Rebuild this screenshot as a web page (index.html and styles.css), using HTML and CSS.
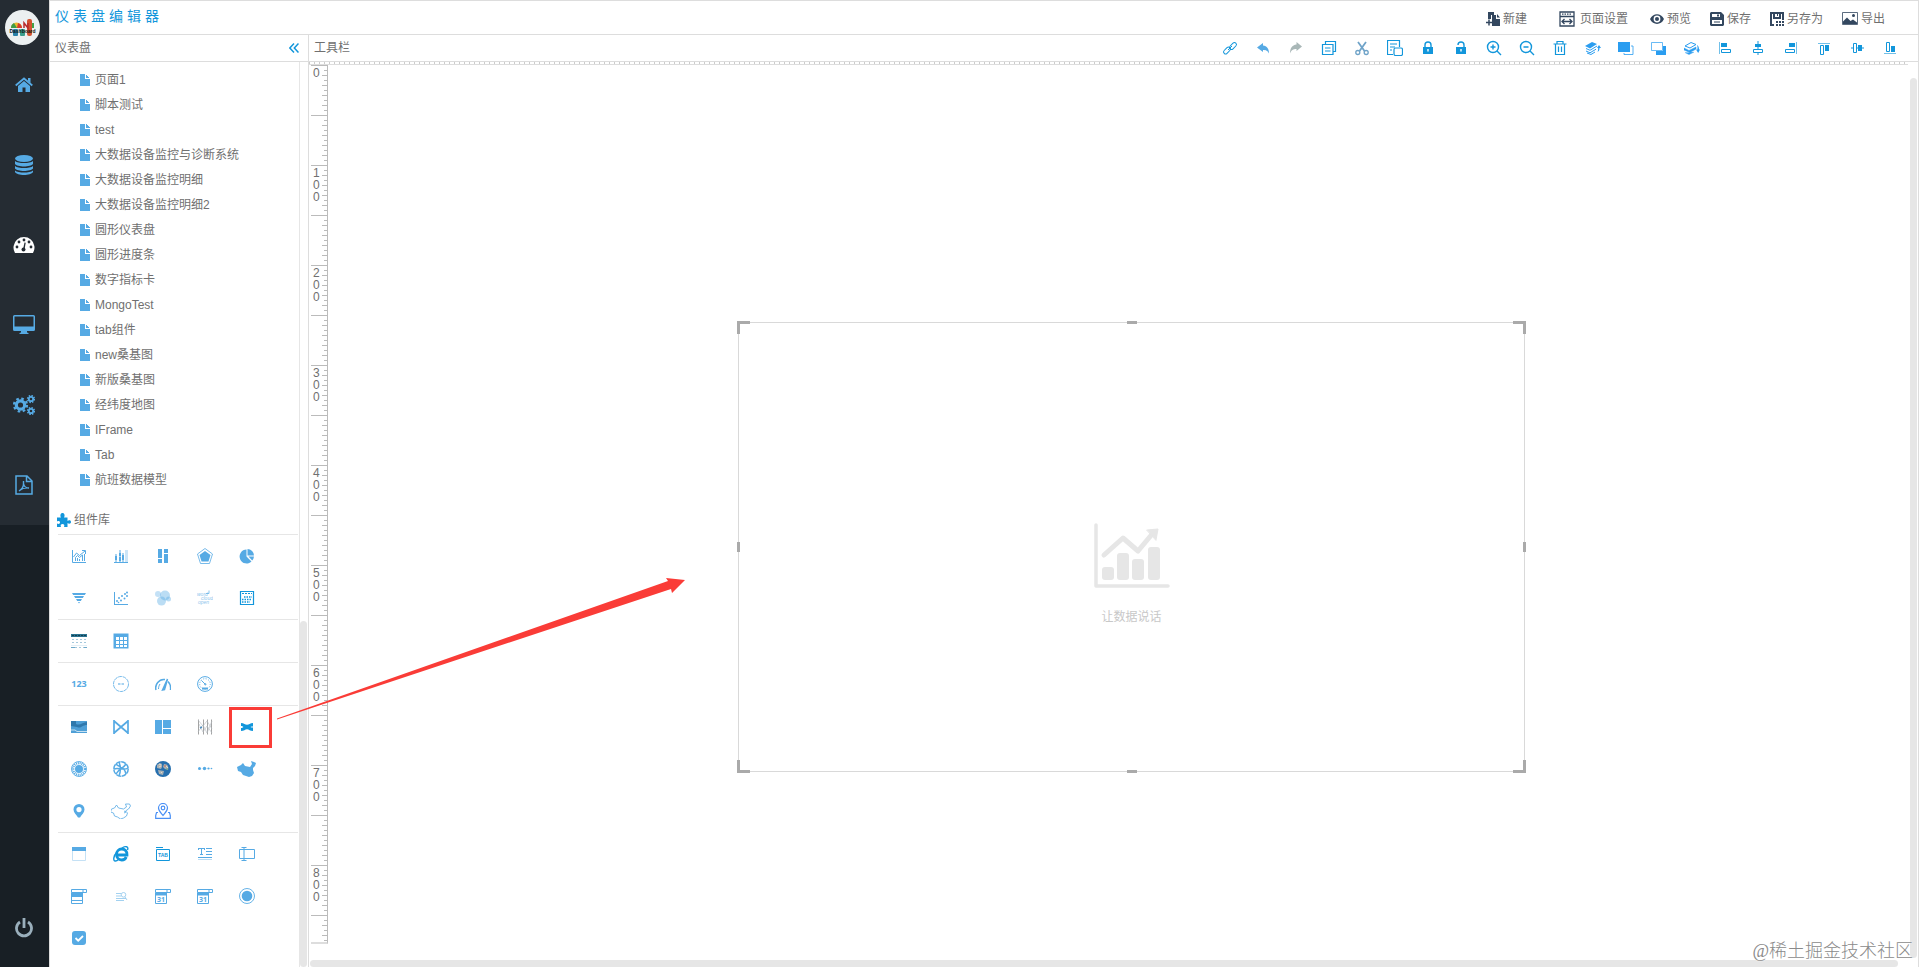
FILE: index.html
```html
<!DOCTYPE html>
<html lang="zh">

<head>
    <meta charset="UTF-8">
    <meta name="viewport" content="width=device-width, initial-scale=1.0">
    <title>仪表盘编辑器</title>
    <link rel="stylesheet" href="styles.css">
</head>

<body>
    <!-- Main navigation -->
    <nav class="sidebar">
        <a href="#" class="logo" aria-label="Dashboard">
            <svg width="35" height="35" viewBox="0 0 35 35">
                <circle cx="17.5" cy="17.5" r="17.5" fill="#ecf0f1" />
                <rect x="8" y="19" width="5" height="7" rx="1" fill="#2980a9" />
                <rect x="15" y="19" width="5" height="7" rx="1" fill="#3a9d8b" />
                <rect x="22" y="9" width="5" height="17" rx="2" fill="#d35230" />
                <path d="M6 18a5.500 5.500 0 0 1 11 0z" fill="#e8b92c" />
                <path d="M6 18a5.500 5.500 0 0 1 3-5l3 5z" fill="#3d9b48" />
                <path d="M13 13a5.500 5.500 0 0 1 4 5h-5z" fill="#d63a2c" />
                <path d="M19 18v-5l4 5v-5" fill="none" stroke="#b92b2b" stroke-width="1.500" />
                <path d="M28 13v5" stroke="#42a045" stroke-width="2" />
                <text x="17.500" y="23" class="logo-text">Dashboard</text>
            </svg>
        </a>
        <a href="#" class="nav-item" aria-label="首页">
            <svg width="18" height="16" viewBox="0 0 18 16" fill="currentColor">
                <path d="M9 4 3 9v6h4.500v-4.500h3V15H15V9z" />
                <path d="M13 1h2.500v5L13 4z" />
                <path d="M.7 8.500 9 1.500l8.300 7" fill="none" stroke="currentColor" stroke-width="1.800" />
            </svg>
        </a>
        <a href="#" class="nav-item" aria-label="数据源">
            <svg width="18" height="20" viewBox="0 0 18 20" fill="currentColor">
                <ellipse cx="9" cy="3.500" rx="9" ry="3.500" />
                <path d="M0 6c3 2.700 15 2.700 18 0v3c-2 3.300-16 3.300-18 0z" />
                <path d="M0 11c3 2.700 15 2.700 18 0v2.500c-2 3.300-16 3.300-18 0z" />
                <path d="M0 15.500c3 2.700 15 2.700 18 0V17c-2 4-16 4-18 0z" />
            </svg>
        </a>
        <a href="#" class="nav-item active" aria-label="仪表盘">
            <svg width="22" height="18" viewBox="0 0 22 18">
                <path d="M2 17a10.500 10.500 0 1 1 18 0z" fill="#fff" />
                <g fill="#252c33">
                    <circle cx="4" cy="11" r="1.400" />
                    <circle cx="6" cy="6" r="1.400" />
                    <circle cx="11" cy="4" r="1.400" />
                    <circle cx="16" cy="6" r="1.400" />
                    <circle cx="18" cy="11" r="1.400" />
                    <circle cx="10.500" cy="13.500" r="2" />
                    <path d="m11.500 6.500 1.200.3-1.200 7-1.500-.3z" />
                </g>
            </svg>
        </a>
        <a href="#" class="nav-item" aria-label="大屏">
            <svg width="22" height="20" viewBox="0 0 22 20" fill="currentColor">
                <path fill-rule="evenodd" d="M1.500 0h19A1.500 1.500 0 0 1 22 1.500v13a1.500 1.500 0 0 1-1.500 1.500H14v1.500l1.500.5v1h-9v-1l1.500-.5V16H1.500A1.500 1.500 0 0 1 0 14.500v-13A1.500 1.500 0 0 1 1.500 0zM1.500 1.500v10h19v-10z" />
            </svg>
        </a>
        <a href="#" class="nav-item" aria-label="设置">
            <svg width="22" height="20" viewBox="0 0 22 20" fill="none" stroke="currentColor">
                <circle cx="7.500" cy="10" r="4.200" stroke-width="3.200" />
                <circle cx="7.500" cy="10" r="6.500" stroke-width="2.200" stroke-dasharray="2.600 2.500" />
                <circle cx="18" cy="4" r="2.200" stroke-width="1.800" />
                <circle cx="18" cy="4" r="3.400" stroke-width="1.500" stroke-dasharray="1.500 1.170" />
                <circle cx="18" cy="16" r="2.200" stroke-width="1.800" />
                <circle cx="18" cy="16" r="3.400" stroke-width="1.500" stroke-dasharray="1.500 1.170" />
            </svg>
        </a>
        <a href="#" class="nav-item" aria-label="报表">
            <svg width="18" height="20" viewBox="0 0 18 20" fill="none" stroke="currentColor" stroke-width="1.500">
                <path d="M1 1h11l5 5v13H1zM11.500 1v5.500H17" />
                <path d="M8.500 6v3c0 3-2 5.500-4.500 7M8.500 8.500c.5 3 2.500 4.500 5.500 4.500-4-.5-7 .5-9.500 2.500" stroke-width="1.400" />
            </svg>
        </a>
        <button type="button" class="power" aria-label="退出">
            <svg width="18" height="20" viewBox="0 0 18 20" fill="none" stroke="currentColor" stroke-width="2.800">
                <path d="M5 4a7.500 7.500 0 1 0 8 0M9 0v10" />
            </svg>
        </button>
    </nav>

    <div class="main">
        <header class="header">
            <h1>仪表盘编辑器</h1>
            <div class="actions">
                <button type="button" class="action action-new">
                    <svg width="14" height="14" viewBox="0 0 14 14" fill="currentColor">
                        <path d="M2 0h6v3H5v4H2z" />
                        <path d="M6 3h4v4h4v7H6z" />
                        <path d="m11 2 3 3.500h-3z" />
                        <path d="M3 7.500v6M0 10.500h6" stroke="currentColor" stroke-width="1.500" />
                    </svg>
                    新建
                </button>
                <button type="button" class="action action-setting">
                    <svg width="16" height="16" viewBox="0 0 16 16" fill="none" stroke="currentColor" stroke-width="1.300">
                        <path d="M1 1h14v14H1zM1 5.500h14M3 10.500h10M5.500 8 3 10.500 5.500 13M10.500 8l2.500 2.500-2.500 2.500" />
                        <path d="M3 3.200h10" stroke-dasharray="1.500 1" />
                    </svg>
                    页面设置
                </button>
                <button type="button" class="action">
                    <svg width="14" height="12" viewBox="0 0 14 12">
                        <path d="M0 6c3-6.500 11-6.500 14 0-3 6.500-11 6.500-14 0z" fill="currentColor" />
                        <circle cx="7" cy="6" r="3.400" fill="#fff" />
                        <circle cx="7" cy="6" r="2" fill="currentColor" />
                    </svg>
                    预览
                </button>
                <button type="button" class="action">
                    <svg width="14" height="14" viewBox="0 0 14 14">
                        <path d="M1 0h10l3 3v10l-1 1H1l-1-1V1z" fill="currentColor" />
                        <path d="M2 2h8v3H2zM2 8h10v4H2z" fill="#fff" />
                        <path d="M7 2.500h2v2H7zM4 9.500h6v1H4z" fill="currentColor" />
                    </svg>
                    保存
                </button>
                <button type="button" class="action">
                    <svg width="14" height="14" viewBox="0 0 14 14" fill="currentColor">
                        <path d="M0 0h14v8h-2V2h-1v5H3V2H2v10h2v2H0z" />
                        <path d="M5 2h4v3H5z" fill="#fff" />
                        <path d="M7 2h1v2H7zM6 9h2v2H6zM9 9h2v2H9zM12 9h2v2h-2zM6 12h2v2H6zM9 12h2v2H9zM12 12h2v2h-2z" />
                    </svg>
                    另存为
                </button>
                <button type="button" class="action">
                    <svg width="16" height="13" viewBox="0 0 16 13">
                        <path d="M.5.5h15v12H.5z" fill="none" stroke="currentColor" stroke-width=".8" />
                        <circle cx="11.500" cy="3.500" r="1.500" fill="currentColor" />
                        <path d="M1 12V9.500l4-4 3.500 3.500L11 7.500l4 3V12z" fill="currentColor" />
                    </svg>
                    导出
                </button>
            </div>
        </header>

        <div class="content">
            <aside class="panel">
                <div class="panel-title">
                    <span>仪表盘</span>
                    <button type="button" class="collapse" aria-label="收起">
                        <svg width="10" height="10" viewBox="0 0 10 10" fill="none" stroke="currentColor" stroke-width="1.500">
                            <path d="M5 .5.800 5 5 9.500M9.500.5 5.300 5l4.200 4.500" />
                        </svg>
                    </button>
                </div>
                <div class="panel-body">
                    <div class="panel-scroll">
                        <ul class="file-list">
                            <li><a href="#">页面1</a></li>
                            <li><a href="#">脚本测试</a></li>
                            <li><a href="#">test</a></li>
                            <li><a href="#">大数据设备监控与诊断系统</a></li>
                            <li><a href="#">大数据设备监控明细</a></li>
                            <li><a href="#">大数据设备监控明细2</a></li>
                            <li><a href="#">圆形仪表盘</a></li>
                            <li><a href="#">圆形进度条</a></li>
                            <li><a href="#">数字指标卡</a></li>
                            <li><a href="#">MongoTest</a></li>
                            <li><a href="#">tab组件</a></li>
                            <li><a href="#">new桑基图</a></li>
                            <li><a href="#">新版桑基图</a></li>
                            <li><a href="#">经纬度地图</a></li>
                            <li><a href="#">IFrame</a></li>
                            <li><a href="#">Tab</a></li>
                            <li><a href="#">航班数据模型</a></li>
                        </ul>

                        <h2 class="library-title">
                            <svg width="14" height="14" viewBox="0 0 14 14" fill="currentColor">
                                <path d="M0 4.500h4C2.800 2.500 3.500 0 5.500 0S8.200 2.500 7 4.500h3.500V8c1.800-1.300 3.500-.5 3.500 1s-1.700 2.300-3.500 1v4H7c1-2-.2-3-1.500-3S3 12 4 14H0v-3.500c1.800 1 3 .3 3-1s-1.200-2-3-1z" />
                            </svg>
                            组件库
                        </h2>

                        <div class="group">
                            <button type="button" aria-label="折线图">
                                <svg viewBox="0 0 16 16" fill="none" stroke="currentColor">
                                    <path d="M1.500 2v12.500H15M2.500 9l3-4 3 2.500L14 3M11 2.500h3.500V6M4.500 13V9.500l2-2 2 2 3-2.500v6M6.500 10v3M8.500 11v2M13.500 6v7" />
                                </svg>
                            </button>
                            <button type="button" aria-label="柱状图">
                                <svg viewBox="0 0 16 16" fill="currentColor">
                                    <path d="M2 8h2v4H2zM6 5h2v3H6zM6 9h2v4H6zM9 7h2v5H9zM2.500 6h1v8h-1zM6.500 2h1v12h-1zM9.500 5h1v9h-1z" />
                                    <path d="M12 2h3v12h-3z" opacity=".3" />
                                    <path d="M1 14h14v1H1z" />
                                </svg>
                            </button>
                            <button type="button" aria-label="堆叠图">
                                <svg viewBox="0 0 16 16" fill="currentColor">
                                    <path d="M3 1h4v9H3zM3 11h4v4H3zM9 1h4v4H9zM9 6h4v9H9z" />
                                </svg>
                            </button>
                            <button type="button" aria-label="雷达图">
                                <svg viewBox="0 0 16 16">
                                    <path d="m8 .5 7.500 5.500-3 9.500h-9L.5 6z" fill="none" stroke="currentColor" stroke-width=".8" />
                                    <path d="M8 3 13.500 7l-2 6.500h-7L2.500 7z" fill="currentColor" />
                                </svg>
                            </button>
                            <button type="button" aria-label="饼图">
                                <svg viewBox="0 0 16 16" fill="currentColor">
                                    <path d="M7.500 1.500v7l5 5A7 7 0 1 1 7.500 1.500z" />
                                    <path d="M8.500 1A6.500 6.500 0 0 1 15 7.500H8.500zM9.500 8.500H15a7 7 0 0 1-1.800 4z" />
                                </svg>
                            </button>
                            <button type="button" aria-label="漏斗图">
                                <svg viewBox="0 0 16 16" fill="currentColor">
                                    <path d="M1 3h14l-1.200 2H2.200zM3 6h10l-1.200 2H4.200zM5 9h6l-1.200 2H6.200zM7 12h2l-1 1.500z" />
                                </svg>
                            </button>
                            <button type="button" aria-label="散点图">
                                <svg viewBox="0 0 16 16" fill="currentColor">
                                    <path d="M1 2h1v12h13v1H1z" />
                                    <circle cx="4" cy="11" r="1" />
                                    <circle cx="6" cy="8" r="1" />
                                    <circle cx="8" cy="10.500" r="1" />
                                    <circle cx="9" cy="6" r="1" />
                                    <circle cx="11.500" cy="8.500" r="1" />
                                    <circle cx="12" cy="4" r="1" />
                                    <circle cx="14" cy="2.500" r="1" />
                                    <circle cx="14" cy="6" r="1" />
                                    <circle cx="5.500" cy="12.500" r=".8" />
                                </svg>
                            </button>
                            <button type="button" aria-label="气泡图">
                                <svg viewBox="0 0 16 16" fill="currentColor">
                                    <circle cx="3" cy="4" r="3" opacity=".35" />
                                    <circle cx="10" cy="5.500" r="5" opacity=".4" />
                                    <circle cx="6.500" cy="11" r="4.500" opacity=".4" />
                                    <circle cx="13.500" cy="9" r="2.500" opacity=".4" />
                                </svg>
                            </button>
                            <button type="button" aria-label="词云">
                                <svg viewBox="0 0 16 16" class="word-cloud">
                                    <text x="0" y="6">word</text>
                                    <text x="4" y="10">cloud</text>
                                    <text x="1" y="14">open</text>
                                    <path d="M9 3.500h3V.5" fill="none" stroke="currentColor" stroke-width=".7" />
                                </svg>
                            </button>
                            <button type="button" class="strong" aria-label="日历图">
                                <svg viewBox="0 0 16 16" fill="none" stroke="currentColor">
                                    <path d="M1.500 1.500h13v13h-13z" stroke-width="1.200" />
                                    <path d="M3 3.500h10" stroke-dasharray="2 1" />
                                    <path d="M5 7h8M3 9.500h10M3 12h8" stroke-width="1.500" stroke-dasharray="1.500 1" />
                                </svg>
                            </button>
                        </div>

                        <div class="group">
                            <button type="button" aria-label="明细表">
                                <svg viewBox="0 0 16 16">
                                    <path d="M0 1h16v3H0z" fill="#2b7390" />
                                    <path d="M1 2.500h14" stroke="#123f52" stroke-dasharray="2 1" />
                                    <path d="M1 6.500h15M1 9.500h15M4 14.500h9" stroke="#a5c8dc" stroke-dasharray="2 2" />
                                    <path d="M0 12.500h16" stroke="#e3eff6" />
                                    <path d="M0 14.500h4M13 14.500h3" stroke="#6fa9c9" />
                                </svg>
                            </button>
                            <button type="button" aria-label="表格">
                                <svg viewBox="0 0 16 16">
                                    <path d="M.5.5h15v15H.5z" fill="currentColor" />
                                    <path d="M3 4h3v3H3zM7 4h3v3H7zM11 4h3v3h-3zM3 8h3v3H3zM7 8h3v3H7zM11 8h3v3h-3zM3 12h3v2H3zM7 12h3v2H7zM11 12h3v2h-3z" fill="#fff" />
                                </svg>
                            </button>
                        </div>

                        <div class="group">
                            <button type="button" class="number" aria-label="指标卡">123</button>
                            <button type="button" aria-label="进度环">
                                <svg viewBox="0 0 16 16" fill="none" stroke="currentColor">
                                    <circle cx="8" cy="8" r="7.500" stroke-width=".8" stroke-dasharray="4 .6" />
                                    <path d="M5 8h6" stroke-width="1.500" stroke-dasharray="2.500 1" opacity=".7" />
                                </svg>
                            </button>
                            <button type="button" aria-label="仪表">
                                <svg viewBox="0 0 16 16" fill="none" stroke="currentColor" stroke-width="1.500">
                                    <path d="M1 14C-.5 9 4 2.500 10 3.500M13 5.500c2 2 3 5 2.500 8.500" />
                                    <path d="m12.500 3-5 11 2-.3z" fill="currentColor" />
                                    <path d="M3.500 13c0-2 .5-3.500 1.500-5" stroke-width="1" />
                                </svg>
                            </button>
                            <button type="button" aria-label="刻度仪表">
                                <svg viewBox="0 0 16 16" fill="none" stroke="currentColor">
                                    <circle cx="8" cy="8" r="7.400" />
                                    <circle cx="8" cy="8" r="5.300" stroke-dasharray="1 1.500" />
                                    <path d="m4.500 4.500 4 4" />
                                    <path d="M5 12.500h6" stroke-width="2" />
                                    <circle cx="8.300" cy="8.300" r=".7" />
                                </svg>
                            </button>
                        </div>

                        <div class="group">
                            <button type="button" aria-label="桑基图">
                                <svg viewBox="0 0 16 16">
                                    <path d="M0 2h16v12H0z" fill="#4f9fd6" />
                                    <path d="M0 2h5v3c4 2 7-2 11-2v3c-5 0-6 4-10 2L0 7z" fill="#2f78ac" />
                                    <path d="M0 11h4l2 1.500h10" fill="none" stroke="#c5e0f1" />
                                </svg>
                            </button>
                            <button type="button" aria-label="新版桑基图">
                                <svg viewBox="0 0 16 16" fill="none" stroke="currentColor" stroke-width="1.700">
                                    <path d="M1 1v14M15 1v14M1 2l14 12M15 2 1 14" />
                                </svg>
                            </button>
                            <button type="button" aria-label="矩形树图">
                                <svg viewBox="0 0 16 16" fill="currentColor">
                                    <path d="M0 1h7v14H0zM8 1h8v8H8zM8 10h8v5H8z" />
                                </svg>
                            </button>
                            <button type="button" aria-label="平行坐标">
                                <svg viewBox="0 0 16 16" fill="none" stroke="#b3bbc1" stroke-width=".6">
                                    <path d="M1.500.5v15M6.500.5v15M10.500.5v15M14.500.5v15" stroke="#8b8b8b" stroke-width=".8" />
                                    <path d="m1 1 5 6 4-5 5 8M1 13l5-7 4 8 5-12M2 5l4 8 4-6 5 7" />
                                    <path d="m3 9 2-1" stroke="#4f8fc0" stroke-width="1.500" />
                                </svg>
                            </button>
                            <button type="button" class="strong" aria-label="关系流图">
                                <svg viewBox="0 0 16 16" fill="currentColor">
                                    <path d="M2 4c3 0 4 1.800 6 1.800S11 4 14 4v3.500c-1 0-2 0-2.500.5.5.500 1.500.5 2.500.5V12c-3 0-4-1.800-6-1.800S5 12 2 12V9c1 0 2-.5 2.500-1C4 7.500 3 7 2 7z" />
                                </svg>
                            </button>
                            <button type="button" aria-label="旭日图">
                                <svg viewBox="0 0 16 16" fill="none" stroke="currentColor">
                                    <circle cx="8" cy="8" r="7.500" stroke-width=".9" />
                                    <circle cx="8" cy="8" r="5.900" stroke-width="2.400" stroke-dasharray="1 .85" />
                                    <circle cx="8" cy="8" r="4" fill="currentColor" stroke="none" />
                                </svg>
                            </button>
                            <button type="button" aria-label="和弦图">
                                <svg viewBox="0 0 16 16" fill="none" stroke="currentColor">
                                    <circle cx="8" cy="8" r="7.200" stroke-width="1.500" stroke-dasharray="5 .65" />
                                    <path d="M3 3c3 4 8 1 10 10M13 3C10 8 6 7 3 13M6 1c2 5 2 9 0 14M1 8c4-2 10 2 14-1" stroke-width="1.500" />
                                </svg>
                            </button>
                            <button type="button" aria-label="地球">
                                <svg viewBox="0 0 16 16">
                                    <circle cx="8" cy="8" r="8" fill="#266fae" />
                                    <path d="M2 4c3-3 6-2 5 2L6 8 2 7zM9 3c4 0 5 3 4 6l-3-1-2-2zM3 9l6 1-1 4-4-1z" fill="#a9b0b4" />
                                    <path d="m4 3 2 1M11 5l2 2M6 11l1 1M4 6l2-1" stroke="#e0ddd0" />
                                    <circle cx="10" cy="5" r=".8" fill="#ca6548" />
                                    <circle cx="12" cy="8" r=".7" fill="#5fa86a" />
                                </svg>
                            </button>
                            <button type="button" aria-label="时间轴">
                                <svg viewBox="0 0 16 16" fill="currentColor">
                                    <circle cx="2.500" cy="7.500" r="1.500" />
                                    <circle cx="7.500" cy="7.500" r="1.700" />
                                    <circle cx="11.500" cy="7.500" r="1.100" />
                                    <circle cx="14.500" cy="7.500" r=".8" />
                                    <path d="M1 7.300h14v.400H1z" opacity=".3" />
                                </svg>
                            </button>
                            <button type="button" aria-label="中国地图">
                                <svg viewBox="0 0 20 16" class="map" fill="currentColor">
                                    <path d="m0 6 4-2 2-2 2 3 5 1 2-3-1-3 3 1 2 1-1 3-2 2v2l1 3-2 3-3 1-3-1-3-1-2-3-3-1z" />
                                </svg>
                            </button>
                            <button type="button" aria-label="定位">
                                <svg viewBox="0 0 16 16" fill="currentColor" fill-rule="evenodd">
                                    <path d="M8 1a5.500 5.500 0 0 1 5.500 5.500c0 3-3 5.500-4.500 8H7c-1.500-2.500-4.500-5-4.500-8A5.500 5.500 0 0 1 8 1zm0 3a2.500 2.500 0 1 0 0 5.200A2.500 2.500 0 0 0 8 4z" />
                                </svg>
                            </button>
                            <button type="button" aria-label="地图轮廓">
                                <svg viewBox="0 0 20 16" class="map" fill="none" stroke="currentColor" stroke-width=".8">
                                    <path d="m.5 6 3-1 2-3 2 3 5 1 3-2-1-3 4 0 1 2-2 3-3 2 2 2-1 3-3 2-3 1-3-2-3-1-1-3-3-1z" />
                                    <path d="m13 8 2 1-2 1" />
                                </svg>
                            </button>
                            <button type="button" class="bright" aria-label="地图标记">
                                <svg viewBox="0 0 16 16" fill="none" stroke="currentColor" stroke-width="1.200">
                                    <path d="M8 12.500C6 10 3.500 8 3.500 5a4.500 4.500 0 0 1 9 0c0 3-2.500 5-4.500 7.500z" />
                                    <circle cx="8" cy="5" r="1.800" />
                                    <path d="M3 9.500H1.500l-.8 3v2.800h14.600v-2.800l-.8-3H13" />
                                </svg>
                            </button>
                        </div>

                        <div class="group">
                            <button type="button" aria-label="容器">
                                <svg viewBox="0 0 16 16">
                                    <path d="M1.500 2h13v12.500h-13z" fill="none" stroke="#c5e1f5" />
                                    <path d="M1 1h14v4H1z" fill="currentColor" />
                                </svg>
                            </button>
                            <button type="button" class="strong" aria-label="网页">
                                <svg viewBox="0 0 16 16" fill="none" stroke="currentColor">
                                    <path d="M3.500 9h10.500c.3-4-2.300-6-5.300-6s-5.200 2.500-5.200 5.500 2.200 5.500 5.200 5.500c2 0 3.800-1 4.500-3" stroke-width="2.800" />
                                    <path d="M9 2c3-2 7-2 5.500 2M4 6C0 10 0 15.500 2.500 15c1 0 2-.5 3-1.500" stroke-width="1.400" />
                                </svg>
                            </button>
                            <button type="button" class="strong" aria-label="选项卡">
                                <svg viewBox="0 0 16 16" fill="none" stroke="currentColor">
                                    <path d="M1.500 3.500h13v11h-13zM1 1.500h7" />
                                    <text x="8" y="11" class="tab-text">TAB</text>
                                </svg>
                            </button>
                            <button type="button" aria-label="文本">
                                <svg viewBox="0 0 16 16" fill="currentColor">
                                    <path d="M1 2h7v2H7V3H5v5h1v1H3V8h1V3H2v1H1z" />
                                    <path d="M9 2h6v1H9zM9 5h6v1H9zM9 8h6v1H9zM1 11h14v1H1z" />
                                    <path d="M1 13h14v1H1z" opacity=".4" />
                                </svg>
                            </button>
                            <button type="button" aria-label="输入框">
                                <svg viewBox="0 0 16 16" fill="none" stroke="currentColor">
                                    <path d="M.5 3.500h15v9H.5zM5 2v12M2.500 1.500h5M2.500 14.500h5" />
                                </svg>
                            </button>
                            <button type="button" aria-label="下拉框">
                                <svg viewBox="0 0 16 16" fill="none" stroke="currentColor">
                                    <path d="M.5 1.500h15v3H.5zM.5 4.500v11h11v-11M.5 12.500h11M12 1.500v3" />
                                    <path d="M1 5h11v4H1z" fill="currentColor" stroke="none" />
                                </svg>
                            </button>
                            <button type="button" aria-label="搜索">
                                <svg viewBox="0 0 16 16" fill="none" stroke="currentColor" stroke-width=".9" opacity=".6">
                                    <path d="M3 5.500h5M3 8h5M3 10.500h10M3 12.500h8M12 9l2 3" />
                                    <circle cx="10.500" cy="6.800" r="2.300" />
                                </svg>
                            </button>
                            <button type="button" aria-label="日期">
                                <svg viewBox="0 0 16 16" fill="none" stroke="currentColor">
                                    <path d="M.5 1.500h15v3H.5zM.5 4.500v11h11v-11M12 1.500v3" />
                                    <path d="M1 5h11v2.500H1z" fill="currentColor" stroke="none" />
                                    <text x="6" y="14" class="date-text">31</text>
                                </svg>
                            </button>
                            <button type="button" aria-label="日期范围">
                                <svg viewBox="0 0 16 16" fill="none" stroke="currentColor">
                                    <path d="M.5 1.500h15v3H.5zM.5 4.500v11h11v-11M12 1.500v3" />
                                    <path d="M1 5h11v2.500H1z" fill="currentColor" stroke="none" />
                                    <text x="6" y="14" class="date-text">31</text>
                                </svg>
                            </button>
                            <button type="button" aria-label="单选">
                                <svg viewBox="0 0 16 16">
                                    <circle cx="8" cy="8" r="7.500" fill="none" stroke="currentColor" stroke-width=".9" />
                                    <circle cx="8" cy="8" r="5.300" fill="currentColor" />
                                </svg>
                            </button>
                            <button type="button" aria-label="多选">
                                <svg viewBox="0 0 16 16">
                                    <rect x="1" y="1" width="14" height="14" rx="3" fill="currentColor" />
                                    <path d="m4.500 8 2.700 2.700L12 6" fill="none" stroke="#fff" stroke-width="1.800" />
                                </svg>
                            </button>
                        </div>
                    </div>
                    <div class="panel-track">
                        <div class="panel-thumb"></div>
                    </div>
                </div>
            </aside>

            <section class="workspace">
                <div class="toolbar">
                    <span>工具栏</span>
                    <div class="tools">
                        <button type="button" aria-label="链接">
                            <svg viewBox="0 0 16 16" fill="none" stroke="currentColor">
                                <rect x="7" y="4" width="8" height="4" rx="2" transform="rotate(-45 11 6)" />
                                <rect x="1" y="8.500" width="8" height="4" rx="2" transform="rotate(-45 5 10.500)" />
                                <path d="m6 10 4-4" />
                            </svg>
                        </button>
                        <button type="button" class="light" aria-label="撤销">
                            <svg viewBox="0 0 16 16" fill="currentColor"><path d="M2 7.500 8 3v2.500c4 .3 6 3.500 6 8C12.500 10.500 11 10 8 10v2z" /></svg>
                        </button>
                        <button type="button" class="off" aria-label="重做">
                            <svg viewBox="0 0 16 16" fill="currentColor"><path d="M14 6.500 8.500 2v2.500C4 5 2 8.500 2 13.500 3.500 10 5 9 8.500 9v2z" /></svg>
                        </button>
                        <button type="button" aria-label="复制">
                            <svg viewBox="0 0 16 16" fill="none" stroke="currentColor" stroke-width="1.200">
                                <path d="M4.500 4V1.500h10v10H12M1.500 4.500H12v10H1.500zM4 8h5.500M4 11h5.500" />
                            </svg>
                        </button>
                        <button type="button" class="dim" aria-label="剪切">
                            <svg viewBox="0 0 16 16" fill="none" stroke="currentColor" stroke-width="1.800">
                                <path d="m4 2 6.500 9M12 2l-6.500 9" />
                                <circle cx="3.800" cy="12.500" r="2" stroke-width="1.300" />
                                <circle cx="12.200" cy="12.500" r="2" stroke-width="1.300" />
                            </svg>
                        </button>
                        <button type="button" aria-label="粘贴">
                            <svg viewBox="0 0 16 16" fill="none" stroke="currentColor" stroke-width="1.200">
                                <path d="M6 14.500H.5V.5h12V7M3 4h7M3 7h5M3 10h2" />
                                <rect x="7" y="8" width="8.500" height="7.500" rx="1.500" />
                            </svg>
                        </button>
                        <button type="button" aria-label="锁定">
                            <svg viewBox="0 0 16 16" fill="none" stroke="currentColor" stroke-width="1.400">
                                <path d="M5 7V5a3 3 0 0 1 6 0v2" />
                                <path d="M3 7h10v7H3z" fill="currentColor" stroke="none" />
                                <path d="M8 9v2.500" stroke="#fff" />
                            </svg>
                        </button>
                        <button type="button" aria-label="解锁">
                            <svg viewBox="0 0 16 16" fill="none" stroke="currentColor" stroke-width="1.400">
                                <path d="M5 5a3 3 0 0 1 6 0v2" />
                                <path d="M3 7h10v7H3z" fill="currentColor" stroke="none" />
                                <path d="M8 9v2.500" stroke="#fff" />
                            </svg>
                        </button>
                        <button type="button" aria-label="放大">
                            <svg viewBox="0 0 16 16" fill="none" stroke="currentColor" stroke-width="1.400">
                                <circle cx="7" cy="7" r="5.500" />
                                <path d="m11 11 4 4M4.500 7h5M7 4.500v5" />
                            </svg>
                        </button>
                        <button type="button" aria-label="缩小">
                            <svg viewBox="0 0 16 16" fill="none" stroke="currentColor" stroke-width="1.400">
                                <circle cx="7" cy="7" r="5.500" />
                                <path d="m11 11 4 4M4.500 7h5" />
                            </svg>
                        </button>
                        <button type="button" aria-label="删除">
                            <svg viewBox="0 0 16 16" fill="none" stroke="currentColor" stroke-width="1.200">
                                <path d="M1.500 4h13M5 4V1.500h6V4M3.500 4v10.500h9V4M6.500 6.500v5.500M9.500 6.500v5.500" />
                            </svg>
                        </button>
                        <button type="button" class="vivid" aria-label="上移一层">
                            <svg viewBox="0 0 16 16" fill="currentColor">
                                <path d="m0 6 7-4 5 2-7 4.500z" />
                                <path d="m1 8.500 4 1.800L12 6M1 11l4 1.800 6-3.600M2 13l4 1.500 4-2.500" fill="none" stroke="currentColor" />
                                <path d="m14 5 2 3h-1.500c0 2-.5 3-2 4 .6-1.500.7-2.500.6-4H12z" />
                            </svg>
                        </button>
                        <button type="button" class="vivid" aria-label="置于顶层">
                            <svg viewBox="0 0 16 16" fill="currentColor">
                                <path d="M0 2h12v10H0z" />
                                <path d="M13 6h2v8.500H6V13" fill="none" stroke="currentColor" stroke-width=".8" />
                            </svg>
                        </button>
                        <button type="button" class="vivid" aria-label="置于底层">
                            <svg viewBox="0 0 16 16" fill="currentColor">
                                <path d="M12 6h3v9H5v-4h7z" />
                                <path d="M.5 2.500h11v8H.5z" fill="none" stroke="currentColor" stroke-width=".7" />
                            </svg>
                        </button>
                        <button type="button" class="vivid" aria-label="下移一层">
                            <svg viewBox="0 0 16 16" fill="none" stroke="currentColor">
                                <path d="m1 6 6-3.500L12 4.500 6 8z" />
                                <path d="m0 8 5 2.500L12 7v2l-6 3.500L0 10zM1 12.500l4 2 5-2.500" fill="currentColor" stroke-width=".5" />
                                <path d="m12 9.500 2.200 3.500L16 9.500h-1C15 7 14.500 6 13 5c.6 1.500.7 3 .4 4.500z" fill="currentColor" stroke="none" />
                            </svg>
                        </button>
                        <button type="button" aria-label="左对齐">
                            <svg viewBox="0 0 16 16" fill="none" stroke="currentColor">
                                <path d="M2.500 2v12" opacity=".6" />
                                <path d="M4 3h6v4H4z" fill="currentColor" stroke="none" />
                                <path d="M4.500 9.500h9v3h-9z" />
                            </svg>
                        </button>
                        <button type="button" aria-label="水平居中">
                            <svg viewBox="0 0 16 16" fill="none" stroke="currentColor">
                                <path d="M8 1v8M8 13v2" />
                                <path d="M5 4h6v3H5z" fill="currentColor" stroke="none" />
                                <path d="M3.500 9.500h9v3h-9z" />
                            </svg>
                        </button>
                        <button type="button" aria-label="右对齐">
                            <svg viewBox="0 0 16 16" fill="none" stroke="currentColor">
                                <path d="M13.500 2v12" opacity=".6" />
                                <path d="M6 3h6v4H6z" fill="currentColor" stroke="none" />
                                <path d="M2.500 9.500h9v3h-9z" />
                            </svg>
                        </button>
                        <button type="button" aria-label="顶部对齐">
                            <svg viewBox="0 0 16 16" fill="none" stroke="currentColor">
                                <path d="M2 3.500h12" opacity=".6" />
                                <path d="M9 5h4v6H9z" fill="currentColor" stroke="none" />
                                <path d="M4.500 5.500h3v9h-3z" />
                            </svg>
                        </button>
                        <button type="button" aria-label="垂直居中">
                            <svg viewBox="0 0 16 16" fill="none" stroke="currentColor">
                                <path d="M2 8h2M8 8h7" />
                                <path d="M9 5h4v6H9z" fill="currentColor" stroke="none" />
                                <path d="M4.500 3.500h3v9h-3z" />
                            </svg>
                        </button>
                        <button type="button" aria-label="底部对齐">
                            <svg viewBox="0 0 16 16" fill="none" stroke="currentColor">
                                <path d="M2 13.500h12" opacity=".6" />
                                <path d="M9 6h4v6H9z" fill="currentColor" stroke="none" />
                                <path d="M4.500 2.500h3v9h-3z" />
                            </svg>
                        </button>
                    </div>
                </div>

                <div class="stage">
                    <div class="stage-main">
                        <div class="ruler-top"></div>
                        <div class="stage-row">
                            <div class="ruler-left">
                                <span>0</span>
                                <span>100</span>
                                <span>200</span>
                                <span>300</span>
                                <span>400</span>
                                <span>500</span>
                                <span>600</span>
                                <span>700</span>
                                <span>800</span>
                            </div>
                            <div class="canvas">
                                <div class="widget">
                                    <i class="corner top-left"></i>
                                    <i class="corner top-right"></i>
                                    <i class="corner bottom-left"></i>
                                    <i class="corner bottom-right"></i>
                                    <i class="handle top"></i>
                                    <i class="handle bottom"></i>
                                    <i class="handle left"></i>
                                    <i class="handle right"></i>
                                    <svg width="76" height="66" viewBox="0 0 76 66" fill="none" stroke="#e6e6e6" stroke-linecap="round" stroke-linejoin="round">
                                        <path d="M2 2v61h72" stroke-width="3.500" />
                                        <path d="m10 32 19-17 15 13 15-18" stroke-width="5" />
                                        <path d="m53 7 11-1-2 11z" fill="#e6e6e6" stroke-width="1" />
                                        <g fill="#e6e6e6" stroke="none">
                                            <rect x="8" y="44" width="12" height="13" rx="3" />
                                            <rect x="23" y="30" width="12" height="27" rx="3" />
                                            <rect x="38" y="36" width="12" height="21" rx="3" />
                                            <rect x="54" y="24" width="12" height="33" rx="3" />
                                        </g>
                                    </svg>
                                    <p>让数据说话</p>
                                </div>
                            </div>
                        </div>
                        <div class="scroll-x"></div>
                    </div>
                    <div class="scroll-y"></div>
                </div>
            </section>
        </div>
    </div>

    <!-- Drag hint: from the component to the canvas -->
    <svg class="hint">
        <rect x="230.500" y="708.500" width="40" height="38" fill="none" stroke="#fa3c37" stroke-width="3" />
        <path d="m277 718.500 391-137.500-2-3 19 2-13 13-1-4-394 130.500z" fill="#fa3c37" />
    </svg>
    <div class="watermark">@稀土掘金技术社区</div>
</body>

</html>
```
FILE: styles.css
```css
* {
    box-sizing: border-box;
}

body {
    display: flex;
    height: 100vh;
    margin: 0;
    overflow: hidden;
    font-family: "Liberation Sans", Arial, "Noto Sans CJK SC", sans-serif;
    font-size: 12px;
    line-height: 16px;
    color: #707070;
    background-color: #fff;
}

button {
    padding: 0;
    border: none;
    background: none;
    font: inherit;
    color: inherit;
    cursor: pointer;
}

svg {
    display: block;
    flex: none;
}

/* Sidebar */
.sidebar {
    display: flex;
    flex-direction: column;
    flex: none;
    width: 49px;
    color: #56aae4;
    background-color: #181f25;
}

.logo {
    height: 45px;
    padding: 10px 5px 0;
    background-color: #252c33;
}

.logo-text {
    font-size: 5px;
    font-weight: bold;
    text-anchor: middle;
    fill: #111;
}

.nav-item {
    display: flex;
    align-items: center;
    justify-content: center;
    height: 80px;
    padding-right: 1px;
    color: #56aae4;
    background-color: #252c33;
}

.power {
    display: flex;
    justify-content: center;
    margin-top: auto;
    padding: 0 1px 29px 0;
    color: #9aafbc;
}

/* Header */
.main {
    display: flex;
    flex-direction: column;
    flex: 1;
    min-width: 0;
    border: 1px solid #ddd;
    border-bottom: none;
}

.header {
    display: flex;
    align-items: center;
    justify-content: space-between;
    height: 34px;
    padding: 0 33px 0 5px;
    border-bottom: 1px solid #ddd;
}

h1 {
    margin: 0 0 4px;
    font-size: 14px;
    font-weight: normal;
    letter-spacing: 4px;
    color: #1296db;
}

.actions {
    display: flex;
    gap: 19px;
    padding-top: 2px;
}

.action {
    display: flex;
    align-items: center;
    gap: 3px;
}

.action svg {
    color: #33475f;
}

.action-new {
    margin-right: 13px;
}

.action-setting {
    gap: 5px;
    margin-right: 3px;
}

.content {
    display: flex;
    flex: 1;
    min-height: 0;
}

/* Left panel */
.panel {
    display: flex;
    flex-direction: column;
    flex: none;
    width: 259px;
    border-right: 1px solid #ddd;
}

.panel-title,
.toolbar {
    display: flex;
    align-items: center;
    justify-content: space-between;
    flex: none;
    height: 27px;
    padding: 0 9px 0 5px;
    border-bottom: 1px solid #ddd;
}

.collapse {
    color: #1296db;
}

.panel-body {
    display: flex;
    flex: 1;
    min-height: 0;
}

.panel-scroll {
    flex: 1;
    overflow: hidden;
}

.panel-track {
    display: flex;
    align-items: flex-end;
    width: 9px;
    border-left: 1px solid #e6e6e6;
}

.panel-thumb {
    width: 7px;
    height: 38.2%;
    border-radius: 4px;
    background-color: #e6e6e6;
}

.file-list {
    margin: 0;
    padding: 5px 0 0 30px;
    list-style: none;
}

.file-list a {
    display: flex;
    align-items: center;
    gap: 5px;
    height: 25px;
    color: #707070;
    text-decoration: none;
}

.file-list a::before {
    content: "";
    width: 10px;
    height: 12px;
    background:
        linear-gradient(to top right, #56aae4 50%, transparent 50%) right top / 4px 4px no-repeat,
        linear-gradient(#56aae4, #56aae4) left top / 5px 12px no-repeat,
        linear-gradient(#56aae4, #56aae4) left bottom / 10px 7px no-repeat;
}

.library-title {
    display: flex;
    align-items: center;
    gap: 3px;
    height: 42px;
    margin: 0 0 0 7px;
    padding-top: 14px;
    font-size: 12px;
    font-weight: normal;
}

.library-title svg {
    color: #1296db;
}

.group {
    display: flex;
    flex-wrap: wrap;
    margin: 0 1px 0 8px;
    border-top: 1px solid #e6e6e6;
    color: #56aae4;
}

.group button {
    display: flex;
    align-items: center;
    justify-content: center;
    width: 42px;
    height: 42px;
}

.group svg {
    width: 16px;
    height: 16px;
}

.group .map {
    width: 20px;
}

.group .strong {
    color: #1296db;
}

.group .bright {
    color: #4a90f5;
}

.group .number {
    font-family: "Noto Sans", sans-serif;
    font-size: 9px;
    font-weight: bold;
}

.word-cloud {
    font-size: 5px;
    font-style: italic;
    fill: #8fc5ec;
}

.tab-text {
    font-size: 5px;
    font-weight: bold;
    text-anchor: middle;
    stroke: none;
    fill: currentColor;
}

.date-text {
    font-family: "Noto Sans", sans-serif;
    font-size: 7px;
    font-weight: bold;
    text-anchor: middle;
    stroke: none;
    fill: currentColor;
}

/* Workspace */
.workspace {
    display: flex;
    flex-direction: column;
    flex: 1;
    min-width: 0;
}

.toolbar {
    padding-right: 12px;
}

.tools {
    display: flex;
    color: #1296db;
}

.tools button {
    display: flex;
    justify-content: center;
    width: 33px;
}

.tools svg {
    width: 16px;
    height: 16px;
}

.tools .light {
    color: #56aae4;
}

.tools .off {
    color: #a9b7b7;
}

.tools .dim {
    color: #6fa3c8;
}

.tools .vivid {
    color: #2a9df0;
}

.stage {
    display: flex;
    flex: 1;
    min-height: 0;
}

.stage-main {
    display: flex;
    flex-direction: column;
    flex: 1;
    min-width: 0;
}

.ruler-top {
    flex: none;
    height: 3px;
    border-bottom: 1px solid #ddd;
    background: repeating-linear-gradient(to right, #ccc 0, #ccc 1px, transparent 1px, transparent 5px);
}

.stage-row {
    display: flex;
    flex: 1;
    min-height: 0;
}

/* Ticks: full width every 50px, 5px long every 10px, 3px long in between */
.ruler-left {
    width: 17px;
    margin: 0 0 16px 2px;
    overflow: hidden;
    border-right: 1px solid #bbb;
    border-bottom: 2px solid #ddd;
    background:
        linear-gradient(#bbb 1px, transparent 1px) right top / 16px 50px repeat-y,
        linear-gradient(#bbb 1px, transparent 1px) right top / 5px 10px repeat-y,
        linear-gradient(transparent 5px, #bbb 5px, #bbb 6px, transparent 6px) right top / 3px 10px repeat-y;
}

.ruler-left span {
    display: block;
    width: 8px;
    height: 100px;
    padding: 2px 0 0 2px;
    line-height: 12px;
    word-break: break-all;
}

.canvas {
    display: flex;
    align-items: center;
    justify-content: center;
    flex: 1;
    min-width: 0;
    padding: 68px 0 0 27px;
}

.widget {
    position: relative;
    display: flex;
    flex-direction: column;
    align-items: center;
    justify-content: center;
    width: 787px;
    height: 450px;
    padding-top: 54px;
    border: 1px solid #d9d9d9;
    color: #c8c8c8;
}

.widget p {
    margin: 20px 0 0;
}

.corner,
.handle {
    position: absolute;
    border: 0 solid #aaa;
}

.corner {
    width: 13px;
    height: 13px;
}

.top-left {
    top: -2px;
    left: -2px;
    border-width: 3px 0 0 3px;
}

.top-right {
    top: -2px;
    right: -2px;
    border-width: 3px 3px 0 0;
}

.bottom-left {
    bottom: -2px;
    left: -2px;
    border-width: 0 0 3px 3px;
}

.bottom-right {
    right: -2px;
    bottom: -2px;
    border-width: 0 3px 3px 0;
}

.handle.top,
.handle.bottom {
    left: calc(50% - 5px);
    width: 10px;
    border-top-width: 3px;
}

.handle.left,
.handle.right {
    top: calc(50% - 5px);
    height: 10px;
    border-left-width: 3px;
}

.handle.top {
    top: -2px;
}

.handle.bottom {
    bottom: -2px;
}

.handle.left {
    left: -2px;
}

.handle.right {
    right: -2px;
}

.scroll-x {
    flex: none;
    height: 7px;
    margin: 0 10px 0 1px;
    border-radius: 4px;
    background-color: #e6e6e6;
}

.scroll-y {
    width: 7px;
    margin: 16px 1px 9px 2px;
    border-radius: 4px;
    background-color: #e6e6e6;
}

/* Overlays */
.hint {
    position: absolute;
    top: 0;
    left: 0;
    width: 100%;
    height: 100%;
    pointer-events: none;
}

.watermark {
    position: absolute;
    right: 6px;
    bottom: 4px;
    font-family: "Liberation Serif", "Noto Sans CJK SC", serif;
    font-size: 18px;
    font-weight: 300;
    line-height: 24px;
    color: #8a8a8a;
    text-shadow: 0 0 2px #fff;
}
```
